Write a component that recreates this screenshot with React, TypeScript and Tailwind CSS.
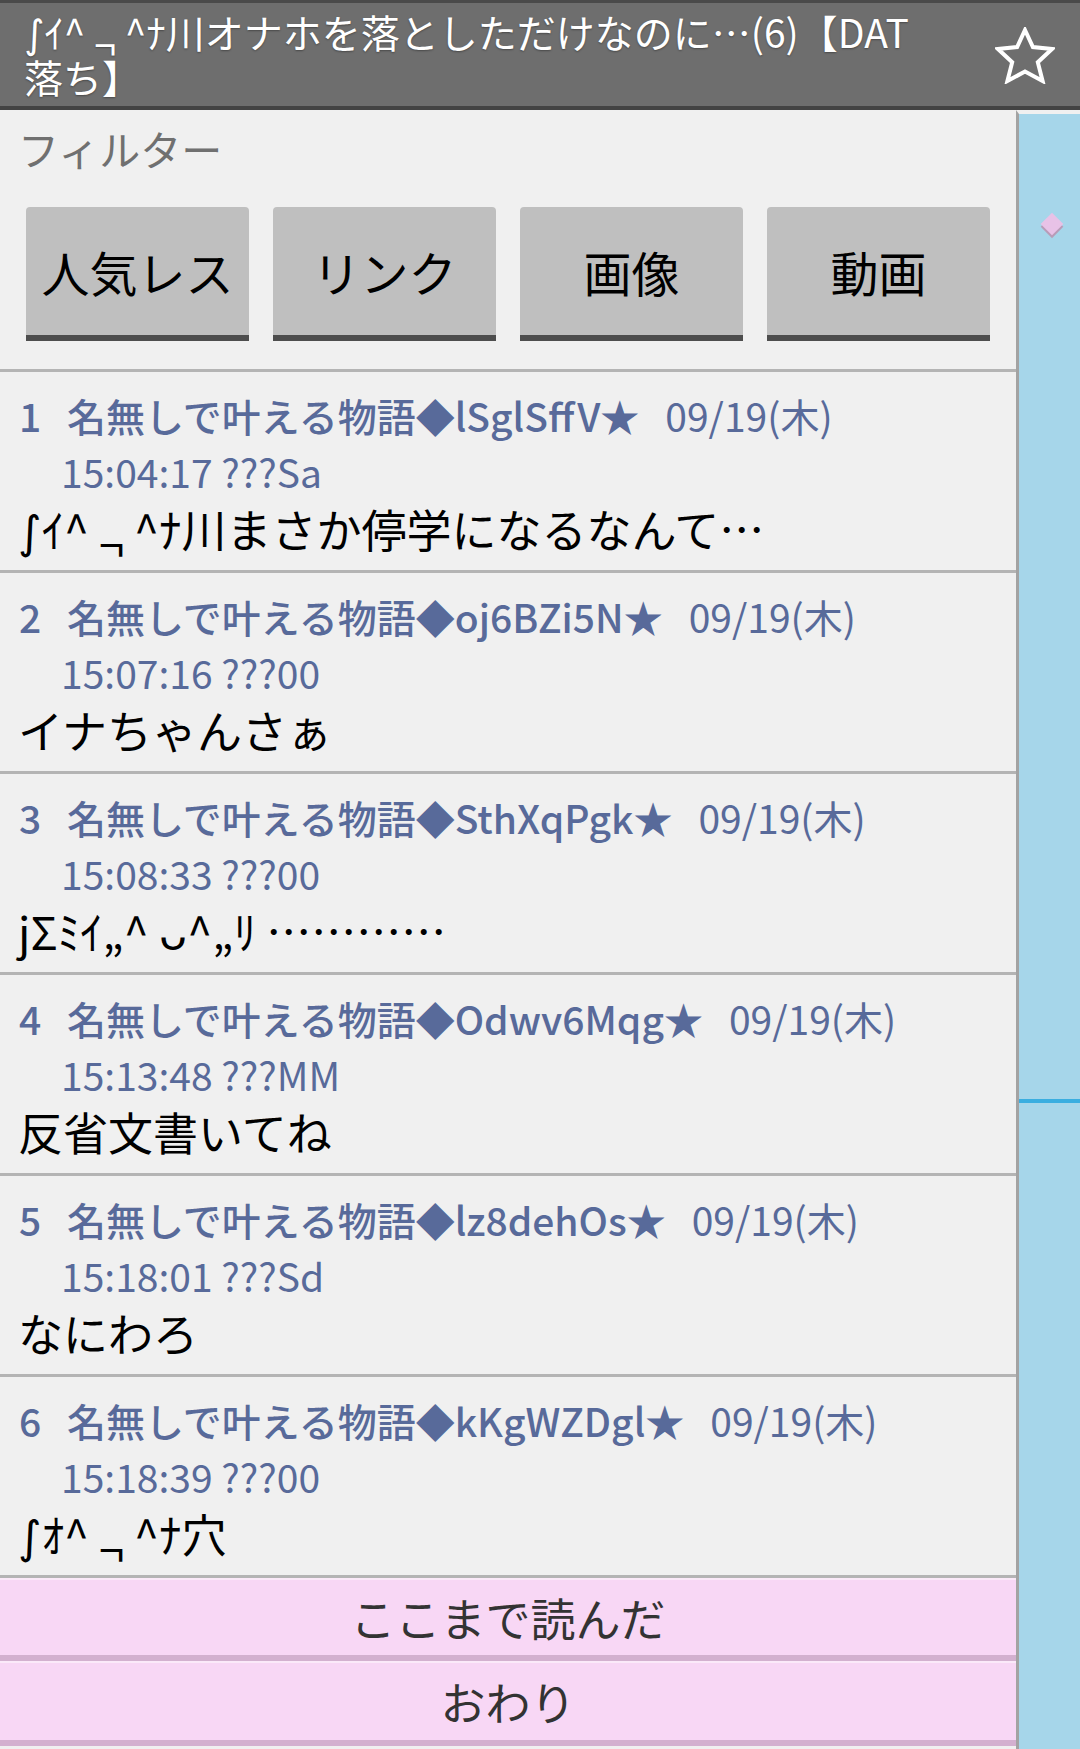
import type { ReactNode } from 'react'

const font = "font-['Noto_Sans_CJK_JP','Noto_Sans',sans-serif]"

// the AA face: narrow integral sign and a low-set not sign
const Face = ({ a, b }: { a: string; b: string }) => (
  <>
    <span className="inline-block font-['DejaVu_Sans',sans-serif] font-normal leading-none">∫</span>
    {a}^ <span className="inline-block leading-none translate-y-[0.3em]">¬</span> ^{b}
  </>
)

const posts: { no: number; id: string; time: string; body: ReactNode }[] = [
  { no: 1, id: 'lSglSffV', time: '15:04:17 ???Sa', body: <><Face a="ｲ" b="ﾅ" />川まさか停学になるなんて…</> },
  { no: 2, id: 'oj6BZi5N', time: '15:07:16 ???00', body: 'イナちゃんさぁ' },
  { no: 3, id: 'SthXqPgk', time: '15:08:33 ???00', body: 'jΣﾐｲ„^ ᴗ^„ﾘ …………' },
  { no: 4, id: 'Odwv6Mqg', time: '15:13:48 ???MM', body: '反省文書いてね' },
  { no: 5, id: 'lz8dehOs', time: '15:18:01 ???Sd', body: 'なにわろ' },
  { no: 6, id: 'kKgWZDgl', time: '15:18:39 ???00', body: <><Face a="ｵ" b="ﾅ" />穴</> },
]

const filters = ['人気レス', 'リンク', '画像', '動画']

export default function App() {
  return (
    <div className={`w-[1080px] h-[1749px] overflow-hidden flex flex-col bg-[#f0f0f0] ${font}`}>
      {/* Header */}
      <div className="h-[110px] shrink-0 flex items-start bg-[#6e6e6e] border-t-[3px] border-t-[#4a4a4a] border-b-[4px] border-b-[#434343]">
        <div className="flex-1 pl-[24px] pt-[6px] text-[39px] leading-[45px] text-white [text-shadow:0_1px_2px_rgba(0,0,0,0.35)] whitespace-nowrap">
          <Face a="ｲ" b="ﾅ" />川オナホを落としただけなのに…(6)【DAT
          <br />
          落ち】
        </div>
        <div className="w-[60px] mt-[24px] mr-[25px]">
          <svg width="60" height="57" viewBox="0 0 60 57">
            <polygon
              points="30,3 37.9,20.1 57,22 42.8,35.2 47.6,54 30,44.5 12.4,54 17.2,35.2 3,22 22.1,20.1"
              fill="none"
              stroke="white"
              strokeWidth="4"
              strokeLinejoin="miter"
            />
          </svg>
        </div>
      </div>

      <div className="flex flex-1 min-h-0">
        {/* Main */}
        <div className="w-[1016px] shrink-0 flex flex-col">
          {/* Filter */}
          <div className="h-[262px] shrink-0 border-b-[3px] border-b-[#b4b4b4]">
            <div className="pl-[18px] pt-[13px] text-[41px] leading-[50px] text-[#707070]">フィルター</div>
            <div className="flex gap-[24px] px-[26px] mt-[34px]">
              {filters.map((f) => (
                <div
                  key={f}
                  className="w-[223px] h-[134px] flex items-center justify-center bg-[#bfbfbf] rounded-t-[4px] border-b-[6px] border-b-[#4d4d4d] text-[48px] text-black"
                >
                  {f}
                </div>
              ))}
            </div>
          </div>

          {/* Posts */}
          {posts.map((p) => (
            <div key={p.no} className="h-[201px] shrink-0 border-b-[3px] border-b-[#b4b4b4] pt-[15px]">
              <div className="flex items-center h-[56px] pl-[19px] text-[39px] text-[#586a9a] whitespace-nowrap">
                <span className="font-medium w-[48px]">{p.no}</span>
                <span className="font-medium">名無しで叶える物語◆{p.id}★</span>
                <span className="ml-[26px]">09/19(木)</span>
              </div>
              <div className="h-[56px] flex items-center pl-[61px] text-[39px] text-[#586a9a]">{p.time}</div>
              <div className="h-[60px] flex items-center pl-[18px] text-[45px] text-black whitespace-pre">
                <span>{p.body}</span>
              </div>
            </div>
          ))}

          {/* Bottom buttons */}
          <div className="h-[83px] shrink-0 flex items-center justify-center bg-[#f8d7f5] border-t-[2px] border-t-[#fbe9f9] border-b-[6px] border-b-[#d3b0cf] text-[45px] text-[#333]">
            ここまで読んだ
          </div>
          <div className="h-[85px] shrink-0 flex items-center justify-center bg-[#f8d7f5] border-t-[2px] border-t-[#fbe9f9] border-b-[6px] border-b-[#d3b0cf] text-[45px] text-[#333]">
            おわり
          </div>
        </div>

        {/* Side scroll bar */}
        <div className="relative flex-1 bg-[#a6d6ea] border-l-[3px] border-l-[#a3a3a3] border-t-[4px] border-t-[#f0f0f0]">
          <div className="absolute left-[25px] top-[102px] w-[16px] h-[16px] rotate-45 bg-[#e8c2e7] shadow-[2px_2px_0_#b89cb8]" />
          <div className="absolute left-0 right-0 top-[985px] h-[4px] bg-[#3aaee0]" />
        </div>
      </div>
    </div>
  )
}
